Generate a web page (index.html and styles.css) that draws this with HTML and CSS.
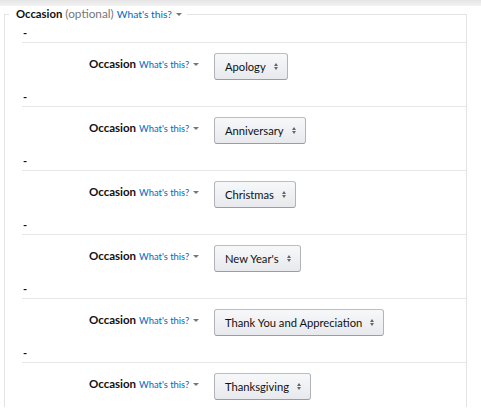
FILE: index.html
```html
<!DOCTYPE html>
<html>
<head>
<meta charset="utf-8">
<link rel="stylesheet" href="styles.css">
</head>
<body>
<div class="topbar"></div>
<fieldset class="group">
  <legend class="legend"><span class="legend-title">Occasion</span> <span class="optional">(optional)</span> <a class="help legend-help">What's this?</a><span class="caret"></span></legend>
  <div class="entry">
    <div class="dash">-</div>
    <div class="row">
      <div class="label"><b>Occasion</b> <a class="help">What's this?</a><span class="caret"></span></div>
      <div class="select"><span>Apology</span><span class="arrows"></span></div>
    </div>
  </div>
  <div class="entry">
    <div class="dash">-</div>
    <div class="row">
      <div class="label"><b>Occasion</b> <a class="help">What's this?</a><span class="caret"></span></div>
      <div class="select"><span>Anniversary</span><span class="arrows"></span></div>
    </div>
  </div>
  <div class="entry">
    <div class="dash">-</div>
    <div class="row">
      <div class="label"><b>Occasion</b> <a class="help">What's this?</a><span class="caret"></span></div>
      <div class="select"><span>Christmas</span><span class="arrows"></span></div>
    </div>
  </div>
  <div class="entry">
    <div class="dash">-</div>
    <div class="row">
      <div class="label"><b>Occasion</b> <a class="help">What's this?</a><span class="caret"></span></div>
      <div class="select"><span>New Year's</span><span class="arrows"></span></div>
    </div>
  </div>
  <div class="entry">
    <div class="dash">-</div>
    <div class="row">
      <div class="label"><b>Occasion</b> <a class="help">What's this?</a><span class="caret"></span></div>
      <div class="select"><span>Thank You and Appreciation</span><span class="arrows"></span></div>
    </div>
  </div>
  <div class="entry">
    <div class="dash">-</div>
    <div class="row">
      <div class="label"><b>Occasion</b> <a class="help">What's this?</a><span class="caret"></span></div>
      <div class="select"><span>Thanksgiving</span><span class="arrows"></span></div>
    </div>
  </div>
</fieldset>
</body>
</html>
```
FILE: styles.css
```css
* { box-sizing: border-box; }
html, body { margin: 0; padding: 0; background: #fff; }
body {
  font-family: Lato, "Open Sans", sans-serif;
  color: #111;
  width: 481px;
  height: 415px;
  overflow: hidden;
}
.topbar {
  height: 6px;
  background: linear-gradient(#e4e4e4, #f3f3f3);
  margin-bottom: 1px;
}
.group {
  margin: 0 14px 0 4px;
  padding: 2px 0 0 17px;
  border: 1px solid #e3e3e3;
  border-bottom: none;
  min-width: 0;
}
.legend {
  padding: 0 5px 0 7px;
  margin-left: -13px;
  font-size: 12px;
  line-height: 14px;
}
.legend-title { font-weight: 700; font-size: 11.3px; }
.optional { color: #777; font-size: 11.8px; }
.help {
  color: #0066c0;
  font-size: 9.4px;
  cursor: pointer;
}
.legend-help { font-size: 10.3px; }
.caret {
  display: inline-block;
  width: 0; height: 0;
  margin-left: 4px;
  vertical-align: 2px;
  border-left: 3px solid transparent;
  border-right: 3px solid transparent;
  border-top: 3px solid #777;
}
.dash {
  height: 20px;
  line-height: 19px;
  font-size: 11px;
  font-weight: 700;
  padding-left: 1px;
  border-bottom: 1px solid #e7e7e7;
}
.row {
  display: flex;
  align-items: flex-start;
  height: 44px;
  padding-top: 10px;
  padding-left: 67px;
}
.label {
  width: 125px;
  font-size: 11.5px;
  padding-top: 4px;
  white-space: nowrap;
}
.label b { font-weight: 700; }
.select {
  display: flex;
  align-items: center;
  height: 27px;
  padding: 0 8px 0 10px;
  border: 1px solid #b5b8be;
  border-color: #babdc2 #b0b3b9 #9a9da3;
  border-radius: 3px;
  background: linear-gradient(#f7f8fa, #e7e9ec);
  font-size: 11.2px;
  color: #111;
  white-space: nowrap;
}
.arrows {
  display: inline-block;
  width: 5px;
  height: 7px;
  margin-left: 8px;
  position: relative;
}
.arrows::before, .arrows::after {
  content: "";
  position: absolute;
  left: 0;
  border-left: 2.5px solid transparent;
  border-right: 2.5px solid transparent;
}
.arrows::before { top: 0; border-bottom: 3px solid #666; }
.arrows::after { bottom: 0; border-top: 3px solid #666; }
```
